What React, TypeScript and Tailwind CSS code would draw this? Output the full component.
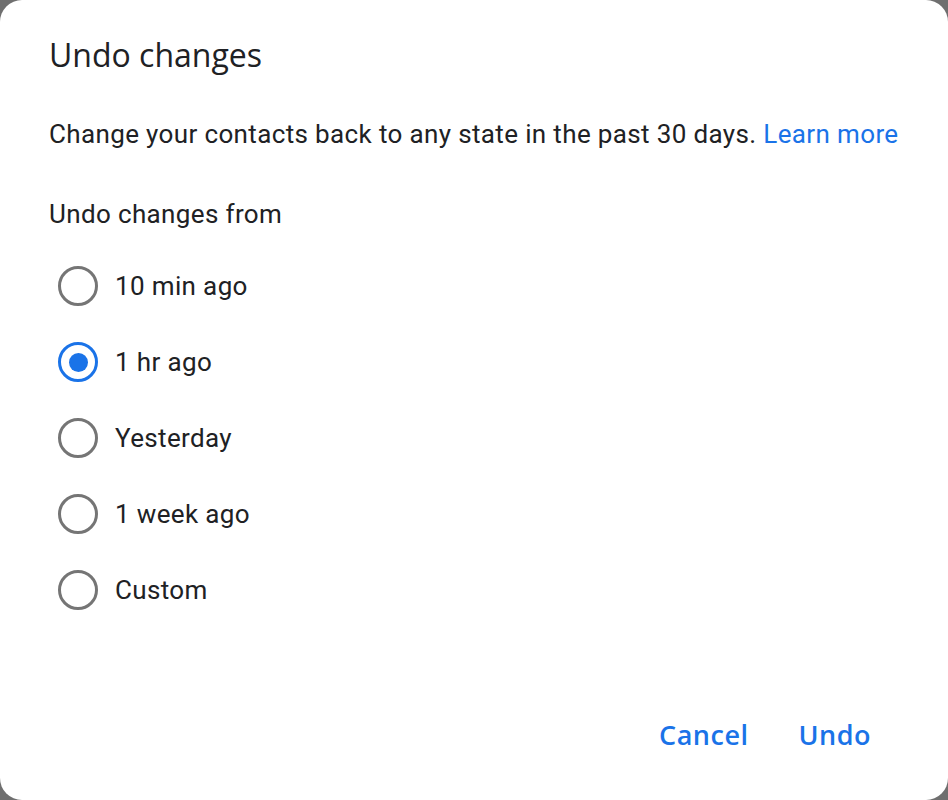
import React, { useState } from 'react';

const options = ['10 min ago', '1 hr ago', 'Yesterday', '1 week ago', 'Custom'];

const Radio: React.FC<{ checked: boolean }> = ({ checked }) => (
  <span
    className={`flex items-center justify-center w-[40px] h-[40px] rounded-full border-[3px] ${
      checked ? 'border-[#1a73e8]' : 'border-[#757575]'
    }`}
  >
    {checked && <span className="w-[19px] h-[19px] rounded-full bg-[#1a73e8]" />}
  </span>
);

const App: React.FC = () => {
  const [selected, setSelected] = useState(1);

  return (
    <div className="w-[948px] h-[800px] bg-[#6f6f6f] font-['Roboto',sans-serif]">
      <div className="w-full h-full bg-white rounded-[22px] flex flex-col px-[49px]">
        {/* Title */}
        <h2 className="mt-[34px] font-['Open_Sans',sans-serif] font-medium text-[32px] leading-[42px] text-[#202124]">
          Undo changes
        </h2>

        {/* Description */}
        <p className="mt-[40px] text-[26px] leading-[36px] text-[#202124] tracking-[0.36px]">
          Change your contacts back to any state in the past 30 days.{' '}
          <span className="text-[#1a73e8]">Learn more</span>
        </p>

        <p className="mt-[44px] text-[26px] leading-[36px] text-[#202124] tracking-[0.36px]">Undo changes from</p>

        {/* Options */}
        <div className="mt-[16px] flex flex-col">
          {options.map((label, i) => (
            <button
              key={label}
              onClick={() => setSelected(i)}
              className="flex items-center h-[76px] pl-[9px] gap-[17px] text-left cursor-pointer"
            >
              <Radio checked={selected === i} />
              <span className="text-[26px] text-[#202124] tracking-[0.36px]">{label}</span>
            </button>
          ))}
        </div>

        {/* Actions */}
        <div className="mt-auto mb-[45px] flex justify-end gap-[50px] pr-[28px] font-['Open_Sans',sans-serif]">
          <button className="text-[27px] font-semibold text-[#1a73e8] tracking-[0.5px]">Cancel</button>
          <button className="text-[27px] font-semibold text-[#1a73e8] tracking-[0.5px]">Undo</button>
        </div>
      </div>
    </div>
  );
};

export default App;
